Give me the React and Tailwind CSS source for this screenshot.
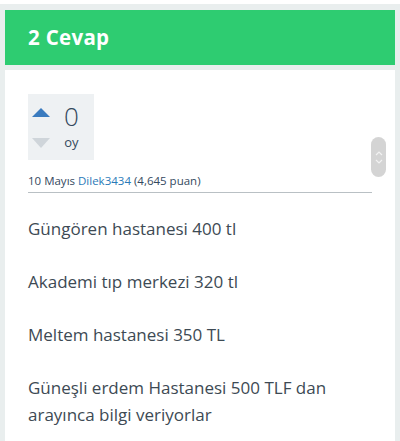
import React from 'react';

const answers = [
  'Güngören hastanesi 400 tl',
  'Akademi tıp merkezi 320 tl',
  'Meltem hastanesi 350 TL',
  'Güneşli erdem Hastanesi 500 TLF dan arayınca bilgi veriyorlar',
];

const App = () => {
  return (
    <div className="relative min-h-[441px] w-[400px] overflow-hidden bg-[#e9eeee] px-[5px] font-['Open_Sans',sans-serif]">
      {/* leftover of previous card */}
      <div className="-mx-[5px] h-[4px] bg-white" />

      <div className="mt-[6px] flex h-[55px] items-center bg-[#2ecc71] px-[23px]">
        <h2 className="text-[20.5px] font-bold tracking-[0.3px] text-white">2 Cevap</h2>
      </div>

      <div className="mt-[5px] bg-white px-[23px] pt-[24px]">
        {/* vote box */}
        <div className="flex h-[66px] w-[66px] bg-[#eef1f3] pt-[8px] pl-[4px]">
          <div className="flex flex-col gap-[21px] pt-[6px]">
            <span className="h-0 w-0 border-x-[9px] border-b-[9px] border-x-transparent border-b-[#3a7bbf]" />
            <span className="h-0 w-0 border-x-[9px] border-t-[10px] border-x-transparent border-t-[#cfd5da]" />
          </div>
          <div className="ml-[14px] flex flex-col items-center">
            <span className="text-[26px] font-light leading-[28px] text-[#34495e]">0</span>
            <span className="mt-[4px] text-[13px] leading-[16px] text-[#34495e]">oy</span>
          </div>
        </div>

        <div className="mt-[14px] border-b border-[#b9c0c4] pb-[4px] text-[11.5px] leading-[14px] text-[#34495e]">
          10 Mayıs <a className="text-[#2a7ab8]">Dilek3434</a> (4,645 puan)
        </div>

        <div className="pt-[22px] pb-[13px] border-b border-[#dfe3e5]">
          {answers.map((a) => (
            <p key={a} className="mb-[26px] last:mb-0 text-[17px] leading-[27px] text-[#3d4a54]">
              {a}
            </p>
          ))}
        </div>
      </div>

      {/* scroll handle overlay */}
      <div className="absolute left-[371px] top-[137px] flex h-[40px] w-[15px] flex-col items-center justify-center gap-[3px] rounded-full bg-[#cfcfcf]/90">
        <svg width="8" height="6" viewBox="0 0 8 6" fill="none" stroke="#f2f2f2" strokeWidth="1.2">
          <path d="M1 5 L4 2 L7 5" />
        </svg>
        <svg width="8" height="6" viewBox="0 0 8 6" fill="none" stroke="#f2f2f2" strokeWidth="1.2">
          <path d="M1 1 L4 4 L7 1" />
        </svg>
      </div>
    </div>
  );
};

export default App;
